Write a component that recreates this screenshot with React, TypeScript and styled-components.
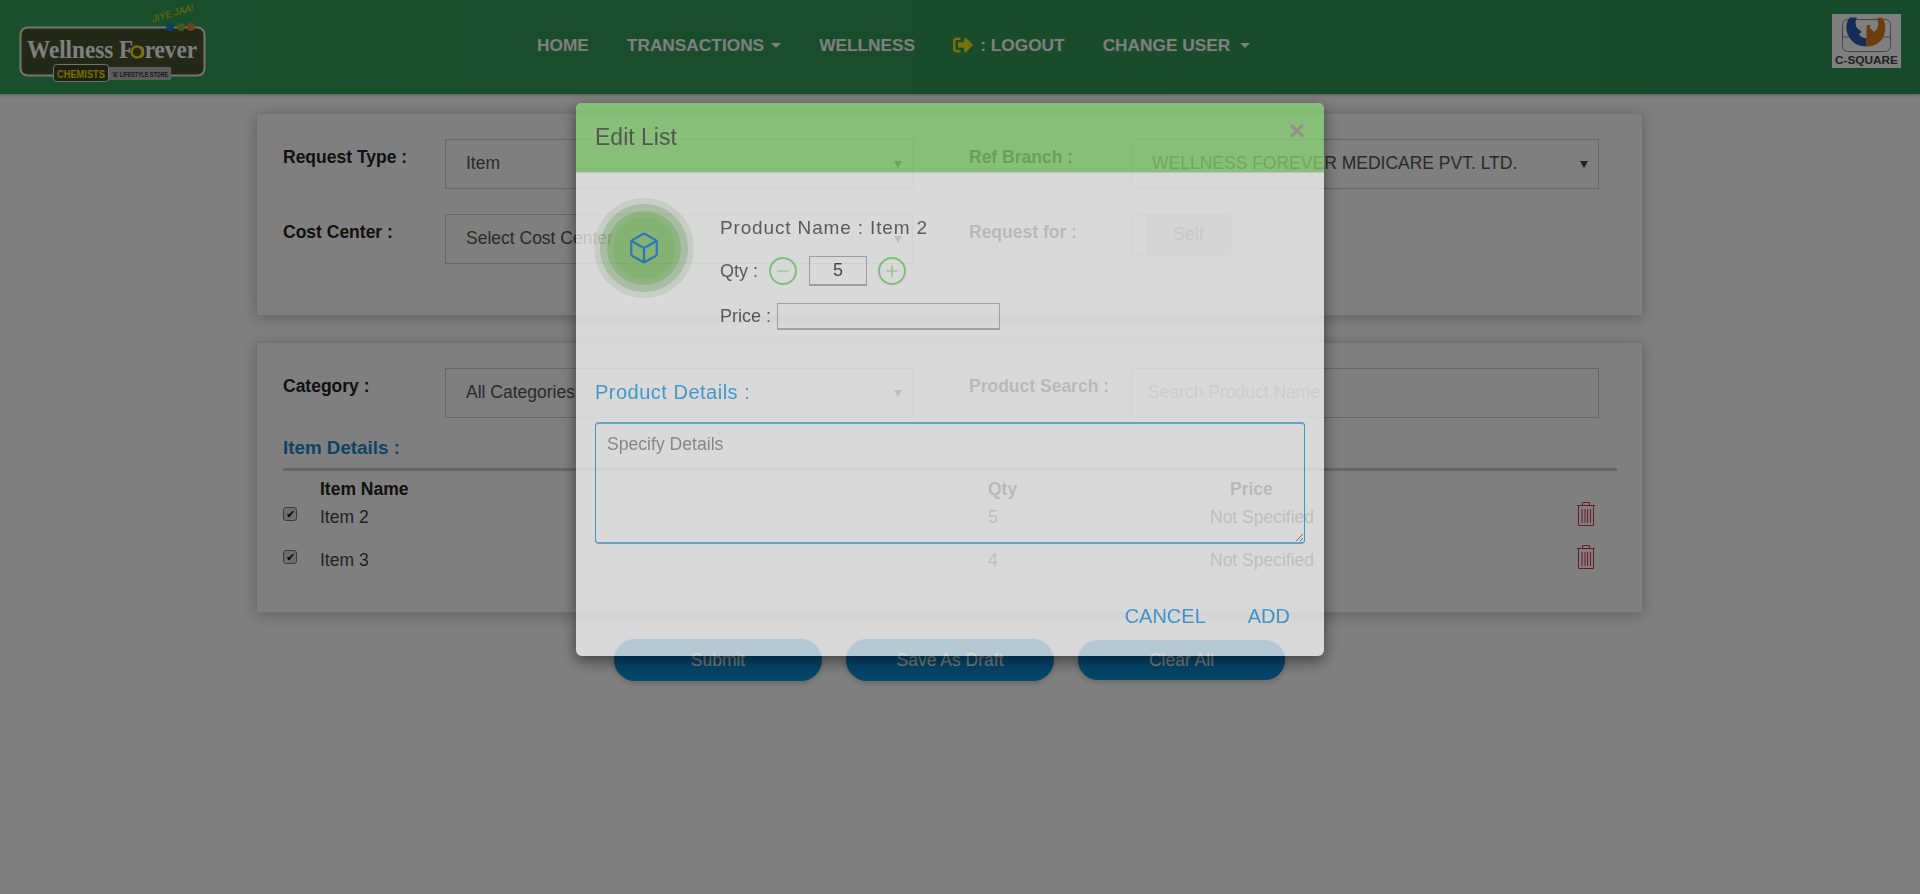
import React from "react";
import styled, { createGlobalStyle } from "styled-components";
import { Box, Minus, Plus } from "lucide-react";
import { FaSignOutAlt } from "react-icons/fa";

const GlobalStyle = createGlobalStyle`
  html, body {
    margin: 0;
    padding: 0;
    height: 100%;
    background: #ffffff;
    overflow: hidden;
    font-family: "Liberation Sans", Arial, sans-serif;
    font-size: 17.5px;
    color: #333333;
  }
  *, *:before, *:after {
    box-sizing: border-box;
  }
`;

const Header = styled.header`
  height: 94px;
  display: flex;
  align-items: flex-start;
  padding: 0 19px 0 18px;
  background: linear-gradient(90deg, #349e58, #2e9454);
  box-shadow: 0 1px 3px rgba(0, 0, 0, 0.3);
`;

const Nav = styled.nav`
  display: flex;
  align-items: center;
  gap: 38px;
  height: 90px;
  margin-left: 325px;
  flex: 1;
`;

const NavItem = styled.a`
  display: flex;
  align-items: center;
  gap: 7px;
  color: #ffffff;
  font-weight: bold;
  font-size: 17.3px;
  white-space: nowrap;
`;

const Caret = styled.span<{ $gap?: number }>`
  width: 0;
  height: 0;
  margin-left: ${(p) => p.$gap ?? 0}px;
  border-left: 5px solid transparent;
  border-right: 5px solid transparent;
  border-top: 5px solid #ffffff;
`;

const LogoutIcon = styled(FaSignOutAlt)`
  color: #f2e01c;
  font-size: 20px;
`;

const LeftLogo = styled.svg`
  width: 194px;
  height: 82px;
  flex: none;
`;

const RightLogo = styled.svg`
  width: 69px;
  height: 54px;
  margin-top: 14px;
  flex: none;
  background: #ffffff;
`;

const Main = styled.main`
  padding: 19px 277px 0 256px;
`;

const Card = styled.section<{ $height: number }>`
  background: #ffffff;
  border: 1px solid #e2e2e2;
  box-shadow: 0 2px 14px rgba(0, 0, 0, 0.25);
  padding: 25px 25px 0 26px;
  margin-bottom: 26px;
  min-height: ${(p) => p.$height}px;
`;

const FormGrid = styled.div`
  display: grid;
  grid-template-columns: 162px 468px 56px 162px 468px;
  row-gap: 25px;
`;

const Label = styled.label<{ $col: number }>`
  grid-column: ${(p) => p.$col};
  font-weight: bold;
  line-height: 20px;
  padding-top: 8px;
  color: #222222;
`;

const SelectWrap = styled.div`
  position: relative;
  height: 50px;

  &:after {
    content: "";
    position: absolute;
    right: 11px;
    top: 22px;
    border-left: 4px solid transparent;
    border-right: 4px solid transparent;
    border-top: 7px solid #444444;
  }
`;

const Select = styled.select`
  appearance: none;
  width: 100%;
  height: 100%;
  background: #ffffff;
  border: 1px solid #cccccc;
  border-radius: 0;
  padding: 0 30px 2px 20px;
  font: inherit;
  color: #555555;
`;

const SearchInput = styled.input`
  height: 50px;
  border: 1px solid #cccccc;
  padding: 0 20px 2px 16px;
  font: inherit;
  color: #555555;

  &::placeholder {
    color: #aaaaaa;
  }
`;

const Toggle = styled.div`
  display: flex;
  width: 100px;
  height: 41px;
  border: 1px solid #c8c8c8;
  border-radius: 3px;
  overflow: hidden;
`;

const ToggleKnob = styled.span`
  width: 15px;
  background: #ffffff;
  border-right: 1px solid #d8d8d8;
`;

const ToggleLabel = styled.span`
  flex: 1;
  display: flex;
  align-items: center;
  justify-content: center;
  background: #e2e2e2;
  color: #888888;
`;

const SectionTitle = styled.h3`
  margin: 19px 0 0;
  font-size: 18.8px;
  line-height: 22px;
  font-weight: bold;
  color: #1b87c4;
`;

const Rule = styled.hr`
  margin: 9px 0 0;
  height: 3px;
  border: 0;
  background: #cccccc;
`;

const Row = styled.div<{ $height: number }>`
  display: grid;
  grid-template-columns: 37px 668px 222px 366px 1fr;
  align-items: start;
  height: ${(p) => p.$height}px;
`;

const HeadCell = styled.div<{ $col: number; $indent?: number }>`
  grid-column: ${(p) => p.$col};
  font-weight: bold;
  line-height: 36px;
  color: #222222;
  padding-left: ${(p) => p.$indent ?? 0}px;
`;

const Cell = styled.div`
  line-height: 24px;
  color: #444444;
`;

const Check = styled.input`
  appearance: none;
  position: relative;
  width: 14px;
  height: 14px;
  margin: 2px 0 0;
  border: 1px solid #767676;
  border-radius: 3px;
  background: #dddddd;

  &:after {
    content: "✔";
    position: absolute;
    left: 2px;
    top: -2px;
    font-size: 11px;
    line-height: 16px;
    color: #111111;
  }
`;

const TrashIcon = styled.svg`
  width: 20px;
  height: 26px;
  margin-top: -4px;
  fill: none;
  stroke: #d6305f;
  stroke-width: 1;
`;

const ButtonRow = styled.div`
  display: flex;
  justify-content: center;
  align-items: center;
  gap: 24px;
`;

const PillButton = styled.button<{ $width: number; $height: number }>`
  width: ${(p) => p.$width}px;
  height: ${(p) => p.$height}px;
  border: 0;
  border-radius: 21px;
  background: #0a8cd6;
  color: #ffffff;
  font: inherit;
  box-shadow: 0 2px 6px rgba(0, 0, 0, 0.2);
`;

const Backdrop = styled.div`
  position: fixed;
  inset: 0;
  background: rgba(0, 0, 0, 0.5);
`;

const Modal = styled.div`
  position: fixed;
  left: 576px;
  top: 103px;
  width: 748px;
  height: 553px;
  background: #ffffff;
  border-radius: 6px;
  opacity: 0.7;
  overflow: hidden;
`;

const ModalShadow = styled.div`
  position: fixed;
  left: 576px;
  top: 103px;
  width: 748px;
  height: 553px;
  border-radius: 6px;
  box-shadow: 0 5px 15px rgba(0, 0, 0, 0.5);
`;

const ModalHead = styled.div`
  height: 70px;
  padding: 21px 19px 0;
  display: flex;
  justify-content: space-between;
  background: #8cdc78;
  border-bottom: 1px solid #dddddd;
`;

const ModalTitle = styled.h4`
  margin: 0;
  font-size: 23px;
  line-height: 26px;
  font-weight: normal;
  color: #444444;
`;

const CloseMark = styled.span`
  font-size: 28px;
  line-height: 14px;
  font-weight: bold;
  color: #999999;
`;

const ProductRow = styled.div`
  display: flex;
  gap: 26px;
  padding: 25px 0 0 18px;
`;

const Halo = styled.div`
  width: 62px;
  height: 62px;
  margin: 19px;
  flex: none;
  display: flex;
  align-items: center;
  justify-content: center;
  border-radius: 50%;
  color: #0d73d2;
  background: #85c86e;
  box-shadow: 0 0 0 6px rgba(133, 200, 110, 0.72), 0 0 0 13px rgba(120, 180, 110, 0.4),
    0 0 0 19px rgba(120, 170, 110, 0.2);
`;

const ProductInfo = styled.div`
  display: flex;
  flex-direction: column;
  font-size: 18px;
  color: #4a4a4a;
`;

const ProductName = styled.div`
  font-size: 19px;
  letter-spacing: 0.85px;
  line-height: 24px;
  margin-top: 18px;
  margin-bottom: 16px;
`;

const QtyLine = styled.div`
  display: flex;
  align-items: center;
  height: 30px;
`;

const RoundButton = styled.button<{ $left: number }>`
  width: 28px;
  height: 28px;
  padding: 0;
  border: 2px solid #7edc74;
  border-radius: 50%;
  background: transparent;
  color: #7edc74;
  display: flex;
  align-items: center;
  justify-content: center;
  margin-left: ${(p) => p.$left}px;
`;

const QtyInput = styled.input`
  width: 58px;
  height: 30px;
  margin-left: 12px;
  border: 1px solid #aaaaaa;
  border-bottom-width: 2px;
  background: transparent;
  text-align: center;
  font: inherit;
  color: #333333;
`;

const PriceLine = styled.div`
  display: flex;
  align-items: center;
  gap: 6px;
  margin-top: 17px;
`;

const PriceInput = styled.input`
  width: 223px;
  height: 27px;
  border: 1px solid #b0b0b0;
  border-bottom-width: 2px;
  background: transparent;
`;

const DetailsBlock = styled.div`
  padding: 50px 19px 0;
`;

const DetailsTitle = styled.div`
  font-size: 20px;
  line-height: 24px;
  letter-spacing: 0.5px;
  color: #2aa0ec;
`;

const DetailsArea = styled.textarea`
  display: block;
  width: 100%;
  height: 122px;
  margin-top: 18px;
  padding: 10px 11px;
  border: 1px solid #2a9ae0;
  border-top: 2px solid #55aee6;
  border-bottom: 2px solid #55aee6;
  border-radius: 4px;
  background: transparent;
  font-size: 17.6px;
  font-family: inherit;

  &::placeholder {
    color: #8a8a8a;
  }
`;

const ModalActions = styled.div`
  display: flex;
  justify-content: flex-end;
  gap: 42px;
  padding: 60px 34px 0 0;
`;

const ActionLink = styled.a`
  font-size: 20px;
  line-height: 24px;
  color: #2aa0ec;
`;

const Trash = () => (
  <TrashIcon viewBox="0 0 20 26">
    <path d="M1 4.500h18M6.500 4.500V1.500h7v3M2.500 4.500v20h15v-20M6 8v14M9 8v14M11.500 8v14M14.500 8v14" />
  </TrashIcon>
);

const WellnessLogo = () => (
  <LeftLogo viewBox="0 0 194 82">
    <rect x="2.500" y="27.500" width="184" height="48" rx="7" fill="#47502e" stroke="#e8e8e0" strokeWidth="2" />
    <text
      x="9"
      y="58"
      fill="#ffffff"
      fontFamily="Liberation Serif"
      fontWeight="bold"
      fontSize="25"
      textLength="170"
      lengthAdjust="spacingAndGlyphs"
    >
      Wellness Forever
    </text>
    <circle cx="119" cy="52" r="5.500" fill="#47502e" stroke="#f2dc00" strokeWidth="2.500" />
    <circle cx="152" cy="27" r="4" fill="#1f7cc4" />
    <circle cx="163" cy="27" r="4" fill="#7fae2e" />
    <circle cx="173" cy="27" r="4" fill="#e2803c" />
    <text x="135" y="22" fill="#e8d000" fontFamily="Liberation Sans" fontStyle="italic" fontSize="9.500" transform="rotate(-16 135 22)">
      JIYE JAA!
    </text>
    <rect x="35.500" y="64.500" width="55" height="17" rx="3" fill="#3c4426" stroke="#e8e8e0" />
    <text x="39" y="77.500" fill="#f2dc00" fontFamily="Liberation Sans" fontWeight="bold" fontSize="11" textLength="48" lengthAdjust="spacingAndGlyphs">
      CHEMISTS
    </text>
    <rect x="91" y="67" width="62" height="13" fill="#b8b8b8" />
    <text x="94" y="77" fill="#333333" fontFamily="Liberation Sans" fontWeight="bold" fontSize="6.500" textLength="56" lengthAdjust="spacingAndGlyphs">
      '&' LIFESTYLE STORE
    </text>
  </LeftLogo>
);

const SquareLogo = () => (
  <RightLogo viewBox="0 0 69 54">
    <rect x="10.500" y="5.500" width="48" height="32" rx="5" fill="none" stroke="#888888" />
    <path d="M10 23h8M51 23h8" stroke="#888888" />
    <path d="M18 3.500C13 9 14 16 16 21c3 7 10 11.500 18.500 11.500V24c-4.500 0-6.500-2-7.500-4l3-2-5-4c-2-3-2-7 0-10.500z" fill="#2b5aa8" />
    <path d="M34.500 32.500C43 32.500 50 28 52 21c2-6 2-12-2-17.500L45 4c1.500 4 1.500 8 0 11l-3 3-4-4v-3h-3.500z" fill="#dd7a1e" />
    <text x="3" y="50" fill="#444444" fontFamily="Liberation Sans" fontWeight="bold" fontSize="11.500" textLength="63" lengthAdjust="spacingAndGlyphs">
      C-SQUARE
    </text>
  </RightLogo>
);

const items = [
  { name: "Item 2", qty: 5 },
  { name: "Item 3", qty: 4 },
];

export default function App() {
  return (
    <>
      <GlobalStyle />
      <Header>
        <WellnessLogo />
        <Nav>
          <NavItem>HOME</NavItem>
          <NavItem>
            TRANSACTIONS <Caret />
          </NavItem>
          <NavItem>WELLNESS</NavItem>
          <NavItem>
            <LogoutIcon /> : LOGOUT
          </NavItem>
          <NavItem>
            CHANGE USER <Caret $gap={3} />
          </NavItem>
        </Nav>
        <SquareLogo />
      </Header>
      <Main>
        <Card $height={203}>
          <FormGrid>
            <Label $col={1}>Request Type :</Label>
            <SelectWrap>
              <Select defaultValue="Item">
                <option>Item</option>
              </Select>
            </SelectWrap>
            <Label $col={4}>Ref Branch :</Label>
            <SelectWrap>
              <Select defaultValue="WELLNESS FOREVER MEDICARE PVT. LTD.">
                <option>WELLNESS FOREVER MEDICARE PVT. LTD.</option>
              </Select>
            </SelectWrap>
            <Label $col={1}>Cost Center :</Label>
            <SelectWrap>
              <Select defaultValue="Select Cost Center">
                <option>Select Cost Center</option>
              </Select>
            </SelectWrap>
            <Label $col={4}>Request for :</Label>
            <Toggle>
              <ToggleKnob />
              <ToggleLabel>Self</ToggleLabel>
            </Toggle>
          </FormGrid>
        </Card>
        <Card $height={271}>
          <FormGrid>
            <Label $col={1}>Category :</Label>
            <SelectWrap>
              <Select defaultValue="All Categories">
                <option>All Categories</option>
              </Select>
            </SelectWrap>
            <Label $col={4}>Product Search :</Label>
            <SearchInput placeholder="Search Product Name" />
          </FormGrid>
          <SectionTitle>Item Details :</SectionTitle>
          <Rule />
          <Row $height={34}>
            <HeadCell $col={2}>Item Name</HeadCell>
            <HeadCell $col={3}>Qty</HeadCell>
            <HeadCell $col={4} $indent={20}>
              Price
            </HeadCell>
          </Row>
          {items.map((item) => (
            <Row $height={43} key={item.name}>
              <Check type="checkbox" defaultChecked />
              <Cell>{item.name}</Cell>
              <Cell>{item.qty}</Cell>
              <Cell>Not Specified</Cell>
              <Trash />
            </Row>
          ))}
        </Card>
        <ButtonRow>
          <PillButton $width={208} $height={42}>
            Submit
          </PillButton>
          <PillButton $width={208} $height={42}>
            Save As Draft
          </PillButton>
          <PillButton $width={207} $height={40}>
            Clear All
          </PillButton>
        </ButtonRow>
      </Main>
      <Backdrop />
      <ModalShadow />
      <Modal>
        <ModalHead>
          <ModalTitle>Edit List</ModalTitle>
          <CloseMark>×</CloseMark>
        </ModalHead>
        <ProductRow>
          <Halo>
            <Box size={34} strokeWidth={1.6} />
          </Halo>
          <ProductInfo>
            <ProductName>Product Name : Item 2</ProductName>
            <QtyLine>
              Qty :
              <RoundButton $left={11}>
                <Minus size={18} strokeWidth={1.5} />
              </RoundButton>
              <QtyInput defaultValue="5" />
              <RoundButton $left={11}>
                <Plus size={18} strokeWidth={1.5} />
              </RoundButton>
            </QtyLine>
            <PriceLine>
              Price :
              <PriceInput />
            </PriceLine>
          </ProductInfo>
        </ProductRow>
        <DetailsBlock>
          <DetailsTitle>Product Details :</DetailsTitle>
          <DetailsArea placeholder="Specify Details" />
        </DetailsBlock>
        <ModalActions>
          <ActionLink>CANCEL</ActionLink>
          <ActionLink>ADD</ActionLink>
        </ModalActions>
      </Modal>
    </>
  );
}
